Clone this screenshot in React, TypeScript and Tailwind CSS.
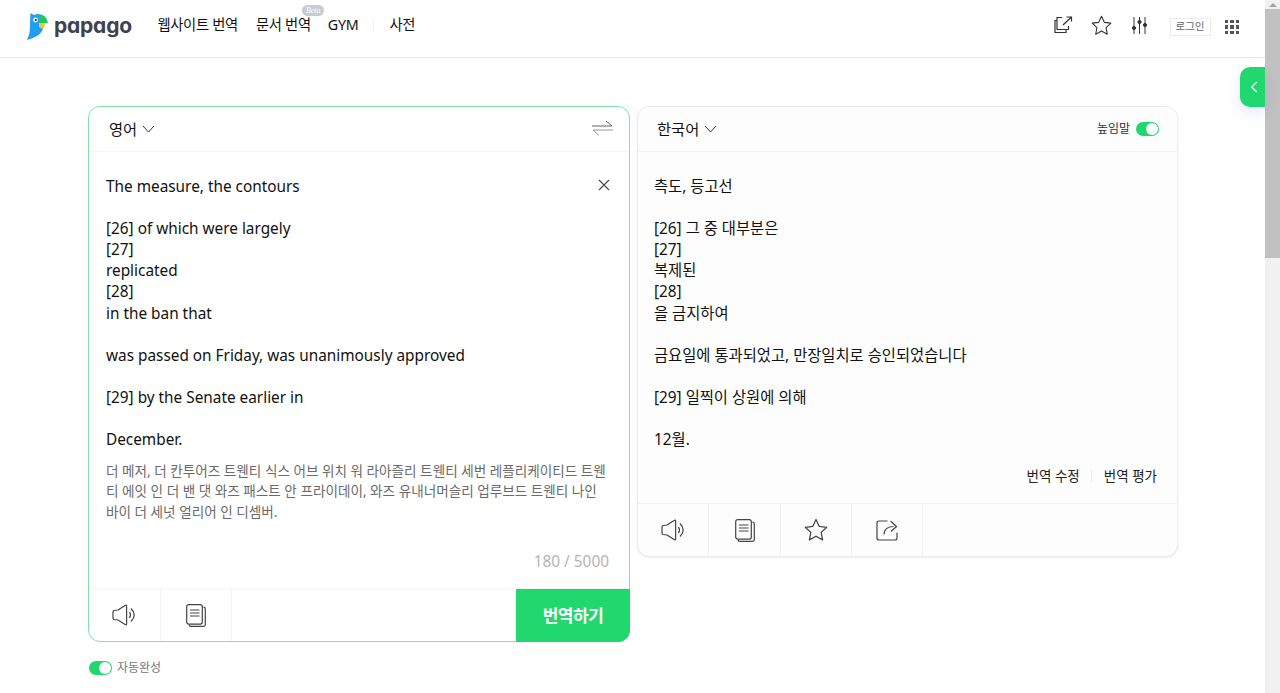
import React from "react";

const font = { fontFamily: '"Noto Sans","Noto Sans CJK KR",sans-serif' };

function Speaker() {
  return (
    <svg width="25" height="22" viewBox="0 0 25 22" fill="none" stroke="#444" strokeWidth="1.2" strokeLinejoin="round">
      <path d="M2 6.5 L6 6 L13.5 1.2 Q14.6 0.8 14.6 2 V20 Q14.6 21.2 13.5 20.8 L6 16 L2 15.5 Q1 15 1 14 V8 Q1 7 2 6.5 Z" />
      <path d="M17.5 8 Q19.5 11 17.5 14" />
      <path d="M19 4.5 Q25.5 11 19 17.5" />
    </svg>
  );
}

function Doc() {
  return (
    <svg width="20" height="23" viewBox="0 0 20 23" fill="none" stroke="#444" strokeWidth="1.2">
      <rect x="0.7" y="0.7" width="15.6" height="19.4" rx="2" />
      <path d="M17.5 3.2 Q19.3 3.2 19.3 5 V20.5 Q19.3 22.3 17.5 22.3 H5 Q3.2 22.3 3 20.6" />
      <path d="M4 6 H13.5 M4 9 H13.5 M4 12 H13.5" />
    </svg>
  );
}

function Star({ size = 24, color = "#444" }: { size?: number; color?: string }) {
  return (
    <svg width={size} height={size} viewBox="0 0 24 24" fill="none" stroke={color} strokeWidth="1.25" strokeLinejoin="round">
      <path d="M12 1.5 L15.2 8.4 L22.7 9.3 L17.2 14.4 L18.6 21.9 L12 18.2 L5.4 21.9 L6.8 14.4 L1.3 9.3 L8.8 8.4 Z" />
    </svg>
  );
}

function Share() {
  return (
    <svg width="22" height="22" viewBox="0 0 22 22" fill="none" stroke="#444" strokeWidth="1.2" strokeLinecap="round" strokeLinejoin="round">
      <path d="M11 2 H3 Q1 2 1 4 V19 Q1 21 3 21 H19 Q21 21 21 19 V14" />
      <path d="M8 15 Q8.5 8 17 7.5" />
      <path d="M15 2.5 L20.5 7.5 L15.5 12" />
    </svg>
  );
}

function Toggle() {
  return (
    <span className="relative inline-block h-[14px] w-[23px] rounded-full bg-[#20d86e]">
      <span className="absolute right-[1px] top-[1px] h-[12px] w-[12px] rounded-full bg-white" />
    </span>
  );
}

function Chevron() {
  return (
    <svg width="13" height="8" viewBox="0 0 13 8" fill="none" stroke="#333" strokeWidth="1">
      <path d="M1 1 L6.5 7 L12 1" />
    </svg>
  );
}

function Logo() {
  return (
    <svg width="21" height="28" viewBox="0 0 21 28">
      <path d="M3.5 1 L7 3 Q9 2 12 2 L17 12 Q16 22 8 25 Q4 27 0 28 Q3 22 3 16 Q3 8 3.5 1 Z" fill="#1e9ff2" />
      <path d="M12 2 Q20 3 21 11 H12 Z" fill="#20c863" />
      <path d="M12 11 H18 Q18 15 15 17 Q13 15.5 12 15 Z" fill="#f7c325" />
      <circle cx="8.5" cy="8" r="2.4" fill="#fff" />
      <circle cx="8.8" cy="8" r="1.1" fill="#222" />
    </svg>
  );
}

function Divider() {
  return <div className="h-full w-[1px] bg-[#f3f3f3]" />;
}

const bodyGap = <div className="h-[21.1px]" />;

export default function App() {
  return (
    <div className="flex h-[693px] overflow-hidden bg-white text-[#111]" style={font}>
      <div className="relative min-w-0 flex-1">
        <header className="flex h-[58px] items-center border-b border-[#e8e8e8] bg-white">
          <div className="ml-[27px] mt-[-6px] flex items-center gap-[6px]">
            <Logo />
            <span className="mt-[-1px] text-[21px] font-bold leading-none tracking-[-0.2px] text-[#41414f] [font-feature-settings:'cv11']" style={{ fontFamily: '"Inter",sans-serif' }}>papago</span>
          </div>
          <nav className="ml-[25.5px] mt-[-8px] flex items-center text-[14.3px] tracking-[-0.3px] text-[#111]">
            <span>웹사이트 번역</span>
            <span className="relative ml-[18px]">
              문서 번역
              <span className="absolute left-[46px] top-[-9px] flex h-[11px] w-[22px] items-center justify-center rounded-full bg-[#c5ccd3] text-[8.5px] italic text-white" style={{ fontFamily: '"Liberation Serif",serif' }}>Beta</span>
            </span>
            <span className="ml-[17px]">GYM</span>
            <span className="ml-[15px] h-[12px] w-[1px] bg-[#eee]" />
            <span className="ml-[15px]">사전</span>
          </nav>
          <div className="ml-auto flex items-center">
            <svg className="mt-[-7px]" width="19" height="18" viewBox="0 0 19 18" fill="none" stroke="#333" strokeWidth="1.2">
              <path d="M8 1.5 H3 V13.5 H14.5 V10" />
              <path d="M3 4.5 H1 V16.5 H12 V13.5" />
              <path d="M9 9 L17.5 1 M12.5 1 H17.5 V5.5" />
            </svg>
            <span className="ml-[18px] mt-[-7px]"><Star size={21} color="#333" /></span>
            <svg className="ml-[20px] mt-[-7px]" width="15" height="17" viewBox="0 0 15 17" fill="#333" stroke="#333">
              <path d="M2 0 V17 M7.5 0 V17 M13 0 V17" strokeWidth="1" />
              <circle cx="2" cy="11" r="1.6" />
              <circle cx="7.5" cy="5" r="1.6" />
              <circle cx="13" cy="8" r="1.6" />
            </svg>
            <span className="ml-[23px] mt-[-3px] flex h-[18px] w-[41px] items-center justify-center border border-[#ececec] text-[10.5px] text-[#666]">로그인</span>
            <div className="ml-[14px] mr-[26px] mt-[-3px] grid grid-cols-3 gap-[2px]">
              {Array.from({ length: 9 }).map((_, i) => (
                <span key={i} className="h-[3.5px] w-[3.5px] bg-[#555]" />
              ))}
            </div>
          </div>
        </header>

        <div className="absolute right-0 top-[67px] flex h-[40px] w-[25px] items-center justify-center rounded-l-[10px] bg-[#20d86e] shadow-[0_6px_14px_rgba(60,80,220,0.12)]">
          <svg className="ml-[3px]" width="8" height="12" viewBox="0 0 8 12" fill="none" stroke="#fff" strokeWidth="1.1">
            <path d="M7 1 L1.5 6 L7 11" />
          </svg>
        </div>

        <main className="mt-[48px] flex items-start gap-[7px] pl-[88px]">
          <div>
            <section className="flex h-[536px] w-[542px] flex-col rounded-[12px] border border-[#7fe3aa] bg-white">
              <div className="flex h-[45px] shrink-0 items-center justify-between border-b border-[#f6f6f6] pl-[20px] pr-[16px]">
                <span className="flex items-center gap-[5px] text-[15.3px]">영어 <Chevron /></span>
                <svg width="21" height="18" viewBox="0 0 21 18" fill="none" stroke="#666" strokeWidth="1">
                  <path d="M0 6 H20 L14 1" />
                  <path d="M21 10 H1 L7 15.5" stroke="#999" />
                </svg>
              </div>
              <div className="relative flex-1 pl-[17px] pr-[20px] pt-[24px]">
                <svg className="absolute right-[19px] top-[27px]" width="12" height="12" viewBox="0 0 12 12" stroke="#444" strokeWidth="1.1">
                  <path d="M1 1 L11 11 M11 1 L1 11" />
                </svg>
                <div className="text-[15.35px] leading-[21.1px] text-[#111]">
                  <div>The measure, the contours</div>
                  {bodyGap}
                  <div>[26] of which were largely</div>
                  <div>[27]</div>
                  <div>replicated</div>
                  <div>[28]</div>
                  <div>in the ban that</div>
                  {bodyGap}
                  <div>was passed on Friday, was unanimously approved</div>
                  {bodyGap}
                  <div>[29] by the Senate earlier in</div>
                  {bodyGap}
                  <div>December.</div>
                </div>
                <p className="mt-[10.5px] break-all text-[13.6px] leading-[20.7px] text-[#6a6a6a]">
                  더 메저, 더 칸투어즈 트웬티 식스 어브 위치 워 라아즐리 트웬티 세번 레플리케이티드 트웬티 에잇 인 더 밴 댓 와즈 패스트 안 프라이데이, 와즈 유내너머슬리 업루브드 트웬티 나인 바이 더 세넛 얼리어 인 디셈버.
                </p>
                <div className="absolute bottom-[15px] right-[20px] text-[15.4px] text-[#b5b5b5]">180 / 5000</div>
              </div>
              <div className="flex h-[53px] shrink-0 border-t border-[#f6f6f6]">
                <div className="flex w-[71px] items-center justify-center"><Speaker /></div>
                <Divider />
                <div className="flex w-[70px] items-center justify-center"><Doc /></div>
                <Divider />
                <div className="flex-1" />
                <div className="mb-[-1px] mr-[-1px] flex w-[114px] items-center justify-center rounded-br-[12px] bg-[#20d86e] text-[17px] font-bold tracking-[-0.5px] text-white">번역하기</div>
              </div>
            </section>
            <div className="ml-[1px] mt-[17px] flex items-center gap-[5px] text-[12px] text-[#777]">
              <Toggle />
              <span>자동완성</span>
            </div>
          </div>

          <section className="flex h-[451px] w-[541px] flex-col overflow-hidden rounded-[12px] border border-[#ececec] bg-[#fdfdfd] shadow-[0_1px_2px_rgba(0,0,0,0.08)]">
            <div className="flex h-[45px] shrink-0 items-center justify-between border-b border-[#f4f4f4] pl-[19px] pr-[18px]">
              <span className="flex items-center gap-[5px] text-[15.3px]">한국어 <Chevron /></span>
              <span className="flex items-center gap-[6px] text-[12px] text-[#333]">높임말 <Toggle /></span>
            </div>
            <div className="relative flex-1 pl-[16px] pt-[24px]">
              <div className="text-[15.35px] leading-[21.1px] text-[#111]">
                <div>측도, 등고선</div>
                {bodyGap}
                <div>[26] 그 중 대부분은</div>
                <div>[27]</div>
                <div>복제된</div>
                <div>[28]</div>
                <div>을 금지하여</div>
                {bodyGap}
                <div>금요일에 통과되었고, 만장일치로 승인되었습니다</div>
                {bodyGap}
                <div>[29] 일찍이 상원에 의해</div>
                {bodyGap}
                <div>12월.</div>
              </div>
              <div className="absolute bottom-[17px] right-[20px] flex items-center text-[13.5px] text-[#222]">
                <span>번역 수정</span>
                <span className="mx-[11.5px] h-[12px] w-[1px] bg-[#eee]" />
                <span>번역 평가</span>
              </div>
            </div>
            <div className="flex h-[53px] shrink-0 border-t border-[#f2f2f2]">
              <div className="flex w-[70px] items-center justify-center"><Speaker /></div>
              <Divider />
              <div className="flex w-[71px] items-center justify-center"><Doc /></div>
              <Divider />
              <div className="flex w-[70px] items-center justify-center"><Star /></div>
              <Divider />
              <div className="flex w-[70px] items-center justify-center"><Share /></div>
              <Divider />
            </div>
          </section>
        </main>
      </div>

      <div className="flex w-[15px] shrink-0 flex-col bg-[#f1f1f1]">
        <div className="flex h-[9px] items-center justify-center">
          <span className="h-0 w-0 border-x-[4px] border-b-[4px] border-x-transparent border-b-[#a3a3a3]" />
        </div>
        <div className="h-[249px] bg-[#c1c1c1]" />
      </div>
    </div>
  );
}
